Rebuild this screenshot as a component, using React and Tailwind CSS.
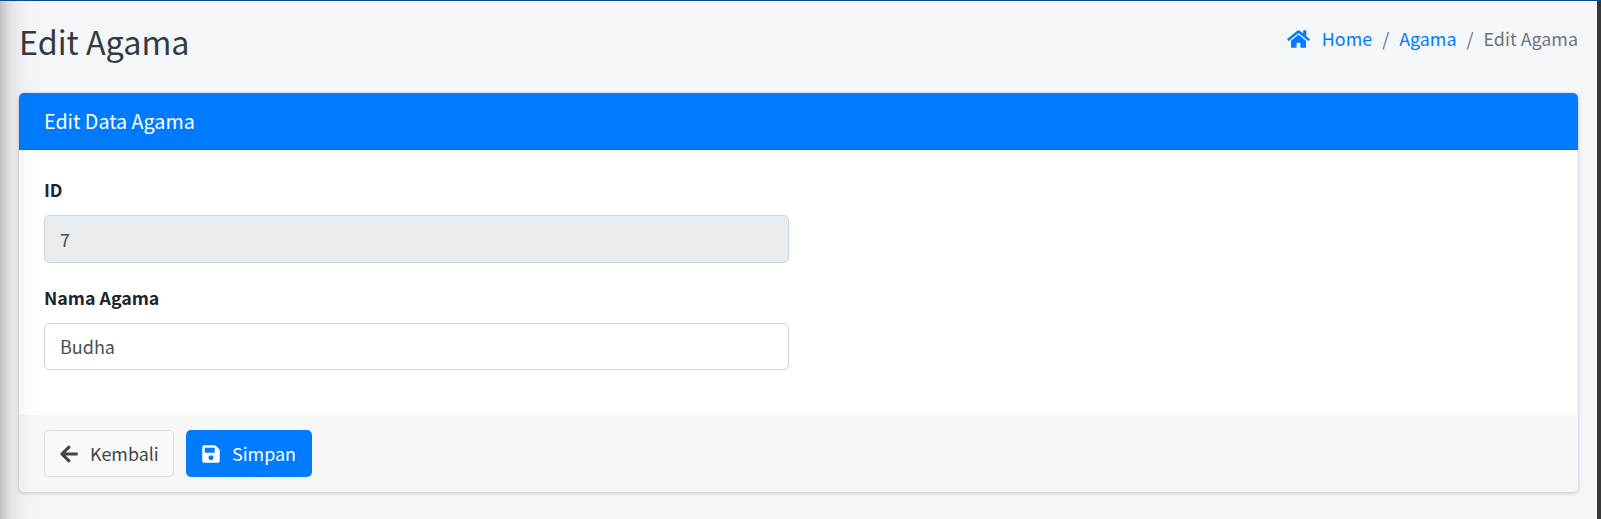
import { FaHome, FaArrowLeft, FaSave } from "react-icons/fa";

function Field({ label, value, disabled, className }) {
  return (
    <label className={`block ${className}`}>
      <span className="block h-[30px] text-[17.8px] leading-[28px] font-bold text-[#212529]">{label}</span>
      <input
        type="text"
        defaultValue={value}
        readOnly={disabled}
        className={`mt-[10px] block w-[745px] rounded-[5px] border border-[#ced4da] px-[15px] text-[18px] text-[#495057] outline-none ${
          disabled ? "h-[48px] bg-[#e9ecef]" : "h-[47px] bg-white pb-px"
        }`}
      />
    </label>
  );
}

export default function App() {
  return (
    <div className="relative flex h-[519px] w-full overflow-hidden border-t border-[#0b4a8a] bg-[#f4f6f9] font-['Noto_Sans_CJK_SC',sans-serif] text-[17.9px] text-[#212529]">
      <main className="flex-1 pl-[19px] pr-[19px]">
        <header className="flex h-[92px] items-start justify-between">
          <h1 className="mt-[19px] text-[32.3px] leading-[43px] whitespace-nowrap text-[#343a40]">Edit Agama</h1>
          <nav className="mt-[22px] flex items-center leading-[30px] whitespace-nowrap text-[#6c757d]">
            <FaHome className="mt-px h-[20px] w-[23px] text-[#007bff]" />
            <a className="ml-[12px] text-[#007bff]">Home</a>
            <span className="mx-[10px]">/</span>
            <a className="text-[#007bff]">Agama</a>
            <span className="mx-[10px]">/</span>
            <span>Edit Agama</span>
          </nav>
        </header>

        <section className="h-[399px] overflow-hidden rounded-[5px] bg-white shadow-[0_0_1px_rgba(0,0,0,0.13),0_1px_4px_rgba(0,0,0,0.2)]">
          <div className="flex h-[57px] items-center border-b border-[#006fe6] bg-[#007bff] pl-[25px] text-[19.7px] text-white">
            Edit Data Agama
          </div>
          <div className="h-[265px] pt-[25px] pl-[25px]">
            <Field label="ID" value="7" disabled />
            <Field label="Nama Agama" value="Budha" className="mt-[20px]" />
          </div>
          <div className="flex h-[77px] gap-[12px] bg-[#f7f7f7] pt-[15px] pl-[25px]">
            <button className="flex h-[47px] w-[130px] items-center rounded-[5px] border border-[#dddddd] bg-[#f8f9fa] pl-[15px] text-[#444444]">
              <FaArrowLeft className="h-[20px] w-[18px]" />
              <span className="mb-px ml-[12px]">Kembali</span>
            </button>
            <button className="flex h-[47px] w-[126px] items-center rounded-[5px] bg-[#007bff] pl-[16px] text-white">
              <FaSave className="h-[20px] w-[18px]" />
              <span className="mb-px ml-[12px]">Simpan</span>
            </button>
          </div>
        </section>
      </main>
      <div className="w-[4px] bg-[#343837]" />
      <div className="pointer-events-none absolute -top-24 -bottom-24 -left-[312px] w-[312px] shadow-[0_17px_35px_rgba(0,0,0,0.25),0_12px_12px_rgba(0,0,0,0.22)]" />
    </div>
  );
}
